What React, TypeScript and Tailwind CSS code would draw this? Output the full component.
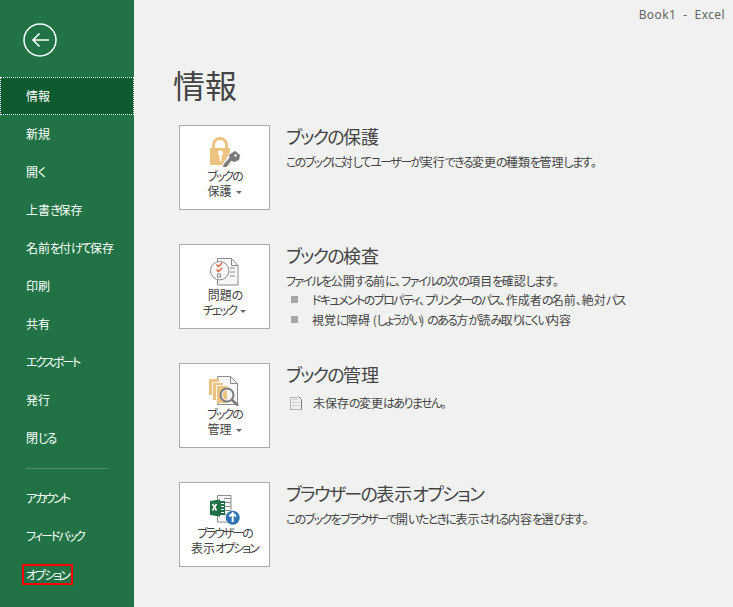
import type { ReactNode } from "react";

const jp = "[font-family:'Noto_Sans_CJK_JP','Liberation_Sans',sans-serif] [font-feature-settings:'palt']";

const topItems = ["新規", "開く", "上書き保存", "名前を付けて保存", "印刷", "共有", "エクスポート", "発行", "閉じる"];

// kana in the reference font is much narrower than kanji, so tighten just those runs
const Jp = ({ text, kana = "tracking-[-2px]" }: { text: string; kana?: string }) => (
  <>
    {text.split(/([\u3041-\u3096\u30A1-\u30FC]+)/).map((part, i) =>
      i % 2 === 1 ? (
        <span key={i} className={kana}>
          {part}
        </span>
      ) : (
        part
      ),
    )}
  </>
);

const Body = ({ text }: { text: string }) => <Jp text={text} kana="tracking-[-1.6px]" />;

const LockIcon = () => (
  <svg width="33" height="33" viewBox="0 0 33 33" fill="none">
    <g transform="translate(2 2)">
      <path d="M3.5 12V8a6.5 6.5 0 0 1 13 0v4" stroke="#edc382" strokeWidth="3" />
      <path d="M0 11h20v17H0z" fill="#edc382" />
      <circle cx="10.5" cy="16" r="2.5" fill="#fff" />
      <rect x="9.5" y="16" width="2" height="8" fill="#fff" />
      <path d="M12 28l5-8 3-5 6-2 5 5-2 6-5 2-3-1-5 6h-3z" fill="#f1f1f1" />
      <path d="M13 30l1-3 6-6.5 2 2-5.5 7.5z" fill="#7a7a7a" />
      <path d="M19 18l6-4 5 4-1 5-5 2-4-2z" fill="#7a7a7a" />
      <circle cx="25.5" cy="18.5" r="1.3" fill="#f1f1f1" />
    </g>
  </svg>
);

const CheckIcon = () => (
  <svg width="33" height="33" viewBox="0 0 33 33" fill="none">
    <g transform="translate(2 4)">
      <path d="M7.5.5h14l6.5 7v19.5H7.5z" fill="#f7f7f7" stroke="#8c8c8c" />
      <path d="M21.5.5v7h6.5" stroke="#8c8c8c" />
      <circle cx="9.7" cy="12.7" r="9.2" fill="#f7f7f7" stroke="#8c8c8c" />
      <path d="M20 10h5M20 14h5M20 18h5" stroke="#8c8c8c" />
      <path d="M6.5 6.5l2 2L12 5M6.5 11.5l2 2L12 10" stroke="#e0603a" strokeWidth="1.4" />
      <rect x="7.5" y="16" width="3" height="3" stroke="#8c8c8c" />
    </g>
  </svg>
);

const ManageIcon = () => (
  <svg width="33" height="33" viewBox="0 0 33 33" fill="none">
    <g transform="translate(1 3)">
      <path d="M8.5.5h13l7 7v21h-20z" fill="#f7f7f7" stroke="#8c8c8c" />
      <path d="M21.5.5v7h7" stroke="#8c8c8c" />
      <rect x="0" y="3" width="10" height="16" fill="#edc382" />
      <rect x="3" y="6" width="11" height="18" fill="#f7f7f7" />
      <rect x="4" y="7" width="10" height="17" fill="#edc382" />
      <rect x="7" y="9" width="11" height="18" fill="#f7f7f7" />
      <rect x="8" y="10" width="10" height="17" fill="#edc382" />
      <circle cx="18" cy="19" r="6.5" fill="#f7f7f7" stroke="#7a7a7a" strokeWidth="2" />
      <path d="M18 14.5a4.5 4.5 0 0 0 0 9z" fill="#edc382" />
      <path d="M23 24l6 5.5" stroke="#7a7a7a" strokeWidth="2.5" />
    </g>
  </svg>
);

const BrowserIcon = () => (
  <svg width="33" height="33" viewBox="0 0 33 33" fill="none">
    <g transform="translate(2 3)">
      <path d="M7.5.5h13.5v26.5H7.5z" fill="#f7f7f7" stroke="#8c8c8c" />
      <path d="M14 3.5h7M14 7.5h7M14 11.5h7M14 15.5h7M14 19.5h7" stroke="#8c8c8c" />
      <path d="M0 6l10-1.5v17L0 20z" fill="#1f7145" />
      <rect x="10" y="6" width="5" height="14" fill="#1f7145" />
      <path d="M11 8.5h3M11 11.5h3M11 14.5h3M11 17.5h3" stroke="#f7f7f7" />
      <path d="M2.5 9l4 6.5M6.5 9l-4 6.5" stroke="#fff" strokeWidth="1.6" />
      <circle cx="22.7" cy="22.7" r="7.5" fill="#f1f1f1" />
      <circle cx="22.7" cy="22.7" r="7" fill="#2f75b5" />
      <path d="M22.7 27v-8.5M19.4 21.5l3.3-3.3 3.3 3.3" stroke="#fff" strokeWidth="2" />
    </g>
  </svg>
);

const Caret = () => (
  <span className="ml-[4px] inline-block h-0 w-0 border-x-[3px] border-t-[3px] border-x-transparent border-t-[#666] align-middle" />
);

const Card = ({ icon, lines, caret }: { icon: ReactNode; lines: string[]; caret?: boolean }) => (
  <div className="flex h-[85px] w-[91px] shrink-0 flex-col items-center border border-[#ababab] bg-white pt-[9px]">
    <div className="h-[33px]">{icon}</div>
    <div className="mt-[1px] whitespace-nowrap text-center text-[12px] leading-[14.5px] text-[#444]">
      <div>
        <Jp text={lines[0]} />
      </div>
      <div>
        <Jp text={lines[1]} />
        {caret && <Caret />}
      </div>
    </div>
  </div>
);

const Section = ({
  icon,
  lines,
  caret = true,
  title,
  children,
}: {
  icon: ReactNode;
  lines: string[];
  caret?: boolean;
  title: string;
  children: ReactNode;
}) => (
  <div className="flex h-[85px] gap-4">
    <Card icon={icon} lines={lines} caret={caret} />
    <div>
      <h2 className="mt-[-2px] text-[18px] leading-[26px] text-[#444]">
        <Jp text={title} kana="tracking-[-1.6px]" />
      </h2>
      <div className="mt-[2.5px] text-[12px] leading-[19.5px] text-[#444]">{children}</div>
    </div>
  </div>
);

const Bullet = ({ children }: { children: ReactNode }) => (
  <div className="flex items-center">
    <span className="ml-[5px] mr-[14px] h-[7px] w-[7px] bg-[#a6a6a6]" />
    <span>{children}</span>
  </div>
);

const NavItem = ({ label }: { label: string }) => (
  <div className="flex h-[38px] items-center pl-[26px] text-[12px] text-white">
    <span>
      <Jp text={label} />
    </span>
  </div>
);

export default function App() {
  return (
    <div className={`flex h-[607px] w-[733px] overflow-hidden bg-[#f1f1f1] ${jp}`}>
      <aside className="flex w-[134px] shrink-0 flex-col bg-[#217346]">
        <div className="h-[77px] pl-[23px] pt-[23px]">
          <svg width="34" height="34" viewBox="0 0 34 34" fill="none" stroke="#fff">
            <circle cx="17" cy="17" r="16" strokeWidth="1.5" />
            <path d="M26 17H10.5M16.5 10.5L10 17l6.5 6.5" strokeWidth="1.6" />
          </svg>
        </div>
        <div className="flex h-[38px] items-center border border-dotted border-white bg-[#0f5b30] pl-[25px] text-[12px] text-white">
          情報
        </div>
        {topItems.map((item) => (
          <NavItem key={item} label={item} />
        ))}
        <div className="ml-[26px] mt-[11px] h-px w-[82px] bg-[#4d9168]" />
        <div className="mt-[10px]">
          <NavItem label="アカウント" />
          <NavItem label="フィードバック" />
          <div className="flex h-[38px] items-center pl-[22px] text-[12px] text-white">
            <span className="border-2 border-[#ff0000] px-[2px] leading-[17px]">
              <Jp text="オプション" />
            </span>
          </div>
        </div>
      </aside>
      <main className="flex-1">
        <div className="whitespace-pre pr-[8px] pt-[6px] text-right text-[12px] leading-[17px] tracking-[0.4px] text-[#666] [font-family:'Noto_Sans',sans-serif]">
          {"Book1  -  Excel"}
        </div>
        <h1 className="ml-[39px] mt-[37px] text-[32px] leading-[48px] text-[#444]">情報</h1>
        <div className="ml-[45px] mt-[17px] flex flex-col gap-[34px]">
          <Section icon={<LockIcon />} lines={["ブックの", "保護"]} title="ブックの保護">
            <Body text="このブックに対してユーザーが実行できる変更の種類を管理します。" />
          </Section>
          <Section icon={<CheckIcon />} lines={["問題の", "チェック"]} title="ブックの検査">
            <div>
              <Body text="ファイルを公開する前に、ファイルの次の項目を確認します。" />
            </div>
            <Bullet>
              <Body text="ドキュメントのプロパティ、プリンターのパス、作成者の名前、絶対パス" />
            </Bullet>
            <Bullet>
              <Body text="視覚に障碍 (しょうがい) のある方が読み取りにくい内容" />
            </Bullet>
          </Section>
          <Section icon={<ManageIcon />} lines={["ブックの", "管理"]} title="ブックの管理">
            <div className="mt-[6px] flex items-center">
              <svg width="16" height="16" viewBox="0 0 16 16" fill="none" className="ml-[2px] mr-[9px]">
                <path d="M2.5 14.5v-12h8M2.5 14.5h11" stroke="#777" strokeDasharray="1 1" />
                <path d="M10.5 1.5l3 3v10" stroke="#777" />
                <path d="M4.5 4.5h5M4.5 7.5h7M4.5 10.5h7" stroke="#aaa" strokeDasharray="1 1" />
              </svg>
              <span>
                <Body text="未保存の変更はありません。" />
              </span>
            </div>
          </Section>
          <Section icon={<BrowserIcon />} lines={["ブラウザーの", "表示オプション"]} caret={false} title="ブラウザーの表示オプション">
            <Body text="このブックをブラウザーで開いたときに表示される内容を選びます。" />
          </Section>
        </div>
      </main>
    </div>
  );
}
